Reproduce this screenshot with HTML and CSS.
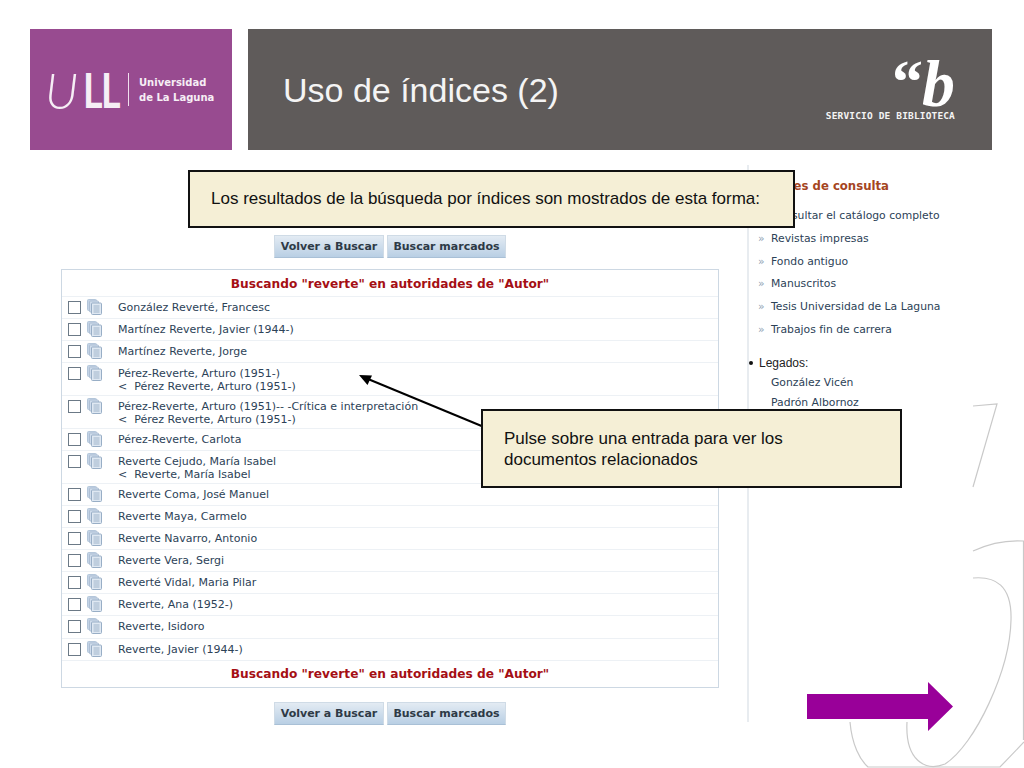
FILE: index.html
```html
<!DOCTYPE html>
<html lang="es">
<head>
<meta charset="utf-8">
<title>Uso de índices (2)</title>
<link rel="stylesheet" href="styles.css">
</head>
<body>
<div class="slide">
  <svg class="deco" width="1024" height="768" viewBox="0 0 1024 768" fill="none" stroke="#c9c9c9" stroke-width="1.2">
    <path d="M973 406 L997 404 L973 487"/>
    <path d="M973 551 C990 543 1008 540 1023.5 541 L1023.5 740"/>
    <path d="M973 578 C995 576 1012 585 1011 620 C1010 670 975 745 945 764 C925 772 905 760 907 722"/>
    <path d="M850 722 C852 745 860 760 868 767 L1000 767 L1024 742"/>
  </svg>

  <header class="header">
    <div class="brand">
      <div class="ull"><span class="ull-u">U</span><span class="ull-l">LL</span></div>
      <div class="brand-name">Universidad<br>de La Laguna</div>
    </div>
    <div class="banner">
      <h1 class="title">Uso de índices (2)</h1>
      <div class="library">
        <div class="library-mark"><span class="quote">“</span><span class="b">b</span></div>
        <div class="library-name">SERVICIO DE BIBLIOTECA</div>
      </div>
    </div>
  </header>

  <div class="content">
    <main class="main">
      <div class="buttons">
        <span class="btn btn-back">Volver a Buscar</span><span class="btn btn-marked">Buscar marcados</span>
      </div>
      <div class="results">
        <div class="results-title">Buscando "reverte" en autoridades de "Autor"</div>

        <div class="row"><span class="check"></span><svg class="doc" viewBox="0 0 15 16"><use href="#docs"/></svg><div class="name">González Reverté, Francesc</div></div>
        <div class="row"><span class="check"></span><svg class="doc" viewBox="0 0 15 16"><use href="#docs"/></svg><div class="name">Martínez Reverte, Javier (1944-)</div></div>
        <div class="row"><span class="check"></span><svg class="doc" viewBox="0 0 15 16"><use href="#docs"/></svg><div class="name">Martínez Reverte, Jorge</div></div>
        <div class="row row-double"><span class="check"></span><svg class="doc" viewBox="0 0 15 16"><use href="#docs"/></svg><div class="name">Pérez-Reverte, Arturo (1951-)<br>&lt;&nbsp; Pérez Reverte, Arturo (1951-)</div></div>
        <div class="row row-double"><span class="check"></span><svg class="doc" viewBox="0 0 15 16"><use href="#docs"/></svg><div class="name">Pérez-Reverte, Arturo (1951)-- -Crítica e interpretación<br>&lt;&nbsp; Pérez Reverte, Arturo (1951-)</div></div>
        <div class="row"><span class="check"></span><svg class="doc" viewBox="0 0 15 16"><use href="#docs"/></svg><div class="name">Pérez-Reverte, Carlota</div></div>
        <div class="row row-double"><span class="check"></span><svg class="doc" viewBox="0 0 15 16"><use href="#docs"/></svg><div class="name">Reverte Cejudo, María Isabel<br>&lt;&nbsp; Reverte, María Isabel</div></div>
        <div class="row"><span class="check"></span><svg class="doc" viewBox="0 0 15 16"><use href="#docs"/></svg><div class="name">Reverte Coma, José Manuel</div></div>
        <div class="row"><span class="check"></span><svg class="doc" viewBox="0 0 15 16"><use href="#docs"/></svg><div class="name">Reverte Maya, Carmelo</div></div>
        <div class="row"><span class="check"></span><svg class="doc" viewBox="0 0 15 16"><use href="#docs"/></svg><div class="name">Reverte Navarro, Antonio</div></div>
        <div class="row"><span class="check"></span><svg class="doc" viewBox="0 0 15 16"><use href="#docs"/></svg><div class="name">Reverte Vera, Sergi</div></div>
        <div class="row"><span class="check"></span><svg class="doc" viewBox="0 0 15 16"><use href="#docs"/></svg><div class="name">Reverté Vidal, Maria Pilar</div></div>
        <div class="row"><span class="check"></span><svg class="doc" viewBox="0 0 15 16"><use href="#docs"/></svg><div class="name">Reverte, Ana (1952-)</div></div>
        <div class="row"><span class="check"></span><svg class="doc" viewBox="0 0 15 16"><use href="#docs"/></svg><div class="name">Reverte, Isidoro</div></div>
        <div class="row"><span class="check"></span><svg class="doc" viewBox="0 0 15 16"><use href="#docs"/></svg><div class="name">Reverte, Javier (1944-)</div></div>

        <div class="results-title results-foot">Buscando "reverte" en autoridades de "Autor"</div>
      </div>
      <div class="buttons buttons-bottom">
        <span class="btn btn-back">Volver a Buscar</span><span class="btn btn-marked">Buscar marcados</span>
      </div>
    </main>

    <aside class="side">
      <div class="side-title">Opciones de consulta</div>
      <ul class="side-list">
        <li>Consultar el catálogo completo</li>
        <li>Revistas impresas</li>
        <li>Fondo antiguo</li>
        <li>Manuscritos</li>
        <li>Tesis Universidad de La Laguna</li>
        <li>Trabajos fin de carrera</li>
      </ul>
      <div class="legados">Legados:</div>
      <div class="legado">González Vicén</div>
      <div class="legado">Padrón Albornoz</div>
    </aside>
  </div>

  <svg class="pointer" width="1024" height="768" viewBox="0 0 1024 768">
    <line x1="484" y1="427" x2="368" y2="379" stroke="#000" stroke-width="2"/>
    <polygon points="359,375 372,375.5 367.5,385" fill="#000"/>
  </svg>

  <div class="callout callout-top">Los resultados de la búsqueda por índices son mostrados de esta forma:</div>
  <div class="callout callout-side">Pulse sobre una entrada para ver los documentos relacionados</div>

  <svg class="next" width="146" height="49" viewBox="0 0 146 49"><polygon points="0,12 121,12 121,0 146,24.5 121,49 121,37 0,37" fill="#990099"/></svg>

  <svg class="sprite" width="0" height="0">
    <defs>
      <g id="docs">
        <rect x="0.5" y="0.5" width="9" height="11" rx="1" fill="#c3d3e6" stroke="#b4c6da"/>
        <rect x="2.5" y="2" width="9" height="11" rx="1" fill="#cfdcec" stroke="#aebfd4"/>
        <rect x="4.5" y="4" width="10" height="11.5" rx="1" fill="#dfe8f2" stroke="#98aec6"/>
        <path d="M6.5 7h6M6.5 9h6M6.5 11h6M6.5 13h6" stroke="#9fb4ca" stroke-width="1"/>
      </g>
    </defs>
  </svg>
</div>
</body>
</html>
```
FILE: styles.css
```css
* { box-sizing: border-box; }
html, body { margin: 0; padding: 0; background: #fff; }
.slide {
  position: relative;
  width: 1024px;
  height: 768px;
  overflow: hidden;
  background: #fff;
  font-family: "DejaVu Sans", sans-serif;
}
.deco, .pointer { position: absolute; left: 0; top: 0; pointer-events: none; }
.sprite { position: absolute; }

.header {
  position: relative;
  display: flex;
  gap: 16px;
  padding: 29px 32px 0 30px;
}
.brand {
  width: 202px;
  height: 121px;
  background: #984b90;
  display: flex;
  align-items: center;
  padding-left: 15px;
  color: #f6eef5;
}
.ull {
  width: 71px;
  height: 36px;
  margin-right: 12px;
  display: flex;
  align-items: center;
  font-family: "Lato", sans-serif;
  line-height: 36px;
}
.ull-u { flex: none; font-size: 49px; font-weight: 300; font-style: italic; margin-right: 5px; }
.ull-l {
  flex: none;
  font-size: 47px;
  font-weight: 700;
  letter-spacing: -2px;
  transform: scaleX(0.8);
  transform-origin: left center;
}
.brand-name {
  border-left: 1px solid #f0dfee;
  padding: 5px 0 5px 10px;
  height: 33px;
  display: flex;
  align-items: center;
  font-size: 10px;
  font-weight: 700;
  line-height: 15px;
  white-space: nowrap;
}
.banner {
  flex: 1;
  height: 121px;
  background: #5f5b5a;
  display: flex;
  justify-content: space-between;
  padding: 0 37px 0 35px;
  color: #f4f4f4;
}
.title {
  margin: 40px 0 0;
  font-family: "Liberation Sans", sans-serif;
  font-size: 34px;
  font-weight: 400;
  line-height: 42px;
}
.library { display: flex; flex-direction: column; align-items: flex-end; padding-top: 25px; }
.library-mark {
  height: 56px;
  display: flex;
  align-items: flex-start;
  color: #fff;
  font-family: "Liberation Serif", serif;
  font-weight: 700;
  font-style: italic;
}
.quote { font-style: normal; font-size: 62px; line-height: 54px; margin-right: -1px; }
.b { font-size: 66px; line-height: 54px; margin-top: 3px; }
.library-name {
  font-family: "DejaVu Sans Mono", monospace;
  font-weight: 700;
  font-size: 9.5px;
  line-height: 12px;
  letter-spacing: 0.15px;
  white-space: nowrap;
}

.content {
  position: relative;
  display: flex;
  gap: 28px;
  padding: 15px 0 0 61px;
}
.main { width: 658px; padding-top: 70px; }
.buttons { display: flex; justify-content: center; gap: 3px; height: 23px; }
.buttons-bottom { margin-top: 14px; }
.btn {
  display: flex;
  align-items: center;
  justify-content: center;
  height: 23px;
  border: 1px solid #cfdbe6;
  border-bottom-color: #a9c0d6;
  background: linear-gradient(#e3ebf3, #b9cfe4);
  color: #2e3a46;
  font-size: 11px;
  font-weight: 700;
  white-space: nowrap;
}
.btn-back { width: 110px; }
.btn-marked { width: 119px; }

.results {
  margin-top: 11px;
  border: 1px solid #cdd8e3;
  height: 419px;
  display: flex;
  flex-direction: column;
}
.results-title {
  flex: none;
  height: 27px;
  padding-top: 1px;
  display: flex;
  align-items: center;
  justify-content: center;
  color: #a50f14;
  font-size: 12.2px;
  font-weight: 700;
  white-space: nowrap;
  border-bottom: 1px solid #edf1f5;
}
.results-foot { flex: 1; border-bottom: 0; }
.row {
  flex: none;
  height: 22.05px;
  display: flex;
  align-items: flex-start;
  padding: 2px 0 0 6px;
  border-bottom: 1px solid #edf1f5;
}
.row-double { height: 33px; }
.check {
  flex: none;
  width: 13px;
  height: 13px;
  margin-top: 2px;
  border: 1px solid #6b7986;
  background: #fff;
}
.doc { flex: none; width: 15px; height: 16px; margin-left: 6px; }
.name {
  margin: 2px 0 0 16px;
  color: #2c4257;
  font-size: 11px;
  line-height: 13px;
  white-space: nowrap;
}

.side {
  width: 240px;
  height: 557px;
  border-left: 2px solid #e8ecf0;
  color: #2c4257;
  font-size: 10.8px;
}
.side-title {
  margin: 14px 0 0 -1px;
  height: 14px;
  line-height: 14px;
  color: #a5451f;
  font-size: 11.7px;
  font-weight: 700;
  white-space: nowrap;
}
.side-list { list-style: none; margin: 15px 0 0; padding: 0 0 0 22px; }
.side-list li {
  position: relative;
  height: 22.8px;
  line-height: 16px;
  white-space: nowrap;
}
.side-list li::before {
  content: "»";
  position: absolute;
  left: -13px;
  top: 0;
  color: #8fa3b5;
}
.legados {
  position: relative;
  margin: 10px 0 0 10px;
  line-height: 16px;
  height: 20px;
  font-size: 12px;
  color: #222;
  font-family: "Liberation Sans", sans-serif;
}
.legados::before {
  content: "";
  position: absolute;
  left: -10px;
  top: 6px;
  width: 4px;
  height: 4px;
  border-radius: 50%;
  background: #111;
}
.legado { margin-left: 22px; height: 20.5px; line-height: 16px; white-space: nowrap; }

.callout {
  position: absolute;
  background: #f5efd6;
  border: 2px solid #111;
  color: #111;
  font-family: "Liberation Sans", sans-serif;
  font-size: 17px;
  line-height: 21px;
}
.callout-top {
  left: 188px;
  top: 170px;
  width: 607px;
  height: 58px;
  padding: 16px 0 0 21px;
  white-space: nowrap;
}
.callout-side {
  left: 481px;
  top: 409px;
  width: 421px;
  height: 79px;
  padding: 17px 60px 0 21px;
}
.next { position: absolute; left: 807px; top: 682px; }
```
